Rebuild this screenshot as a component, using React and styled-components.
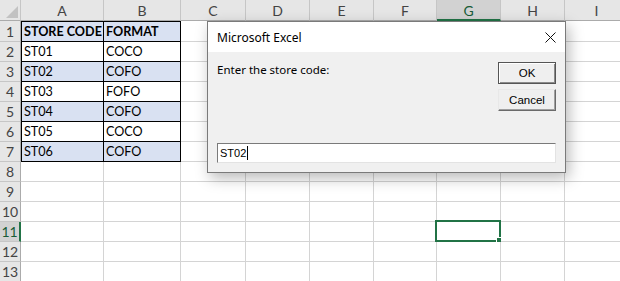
import styled, { createGlobalStyle } from "styled-components";

const GlobalStyle = createGlobalStyle`
  html, body {
    margin: 0;
    padding: 0;
    background: #fff;
    overflow: hidden;
  }
`;

const Sheet = styled.div`
  position: relative;
  display: grid;
  grid-template-columns: 21px 83px 77px 65px 64px 64px 63px 64px 64px 64px;
  grid-template-rows: 21px 21px repeat(12, 20px);
  width: 620px;
  height: 281px;
  overflow: hidden;
  font-family: Lato, "Liberation Sans", sans-serif;
  font-size: 12.6px;
  color: #000;
`;

const Corner = styled.div`
  position: relative;
  box-sizing: border-box;
  background: #e6e6e6;
  border-right: 1px solid #c6c6c6;
  border-bottom: 1px solid #ababab;
  &::after {
    content: "";
    position: absolute;
    right: 2px;
    bottom: 2px;
    border-style: solid;
    border-width: 0 0 12px 12px;
    border-color: transparent transparent #c2c2c2 transparent;
  }
`;

const ColHead = styled.div`
  box-sizing: border-box;
  display: flex;
  align-items: center;
  justify-content: center;
  background: ${(p) => (p.$active ? "#d2d2d2" : "#e6e6e6")};
  border-right: 1px solid #c6c6c6;
  border-bottom: ${(p) => (p.$active ? "2px solid #217346" : "1px solid #ababab")};
  color: ${(p) => (p.$active ? "#185c37" : "#444")};
  font-size: 14px;
  padding-top: ${(p) => (p.$active ? "1px" : "0")};
`;

const RowHead = styled.div`
  box-sizing: border-box;
  display: flex;
  align-items: center;
  justify-content: center;
  background: ${(p) => (p.$active ? "#d2d2d2" : "#e6e6e6")};
  border-right: ${(p) => (p.$active ? "2px solid #217346" : "1px solid #ababab")};
  border-bottom: 1px solid #c6c6c6;
  color: ${(p) => (p.$active ? "#185c37" : "#444")};
  font-size: 14px;
`;

const Cell = styled.div`
  position: relative;
  box-sizing: border-box;
  display: flex;
  align-items: center;
  padding-left: 2px;
  white-space: nowrap;
  background: ${(p) => (p.$fill ? "#d9e1f2" : "#fff")};
  font-weight: ${(p) => (p.$bold ? 700 : 400)};
  border-right: 1px solid ${(p) => (p.$table ? "#000" : "#d4d4d4")};
  border-bottom: 1px solid ${(p) => (p.$table ? "#000" : "#d4d4d4")};
  border-top: ${(p) => (p.$top ? "1px solid #000" : "none")};
  border-left: ${(p) => (p.$left ? "1px solid #000" : "none")};
`;

const Selection = styled.div`
  position: absolute;
  top: -2px;
  left: -2px;
  right: -1px;
  bottom: -1px;
  border: 2px solid #217346;
  &::after {
    content: "";
    position: absolute;
    right: -3px;
    bottom: -3px;
    width: 5px;
    height: 5px;
    background: #217346;
    box-shadow: 0 0 0 1px #fff;
  }
`;

const Dialog = styled.div`
  position: absolute;
  left: 207px;
  top: 21px;
  width: 359px;
  height: 152px;
  box-sizing: border-box;
  display: flex;
  flex-direction: column;
  background: #f0f0f0;
  border: 1px solid #7a7a7a;
  box-shadow: 3px 5px 14px rgba(0, 0, 0, 0.28);
  font-family: "Noto Sans", "Open Sans", sans-serif;
  font-size: 11.5px;
`;

const TitleBar = styled.div`
  height: 30px;
  display: flex;
  align-items: center;
  justify-content: space-between;
  padding: 0 9px 0 9px;
  background: #fff;
  color: #000;
  font-size: 12px;
`;

const Body = styled.div`
  flex: 1;
  display: grid;
  grid-template-columns: 1fr 58px;
  grid-template-rows: auto 1fr auto;
  padding: 10px 9px 9px 9px;
`;

const Prompt = styled.div`
  line-height: 16px;
  color: #000;
`;

const Buttons = styled.div`
  grid-row: 1 / 3;
  grid-column: 2;
  display: flex;
  flex-direction: column;
  gap: 5px;
`;

const Button = styled.div`
  box-sizing: border-box;
  height: 22px;
  display: flex;
  align-items: center;
  justify-content: center;
  background: #efefef;
  font-family: "Liberation Sans", Arial, sans-serif;
  font-size: 11.5px;
  color: #000;
  border: 1px solid;
  border-color: ${(p) => (p.$default ? "#555 #555 #555 #555" : "#e8e8e8 #6a6a6a #6a6a6a #e8e8e8")};
  box-shadow: ${(p) =>
    p.$default
      ? "inset 1px 1px 0 #fff, inset -1px -1px 0 #8a8a8a"
      : "inset -1px -1px 0 #a0a0a0"};
`;

const Input = styled.div`
  grid-column: 1 / -1;
  box-sizing: border-box;
  height: 20px;
  display: flex;
  align-items: center;
  padding-left: 2px;
  background: #fff;
  border: 1px solid;
  border-color: #7a7a7a #e3e3e3 #e3e3e3 #7a7a7a;
  font-family: "Liberation Sans", Arial, sans-serif;
  font-size: 11px;
  color: #000;
`;

const Caret = styled.span`
  display: inline-block;
  width: 1px;
  height: 14px;
  margin-left: 1px;
  background: #000;
`;

const cols = ["A", "B", "C", "D", "E", "F", "G", "H", "I"];

const table = [
  ["STORE CODE", "FORMAT"],
  ["ST01", "COCO"],
  ["ST02", "COFO"],
  ["ST03", "FOFO"],
  ["ST04", "COFO"],
  ["ST05", "COCO"],
  ["ST06", "COFO"],
];

function CloseIcon() {
  return (
    <svg width="11" height="11" viewBox="0 0 11 11">
      <path d="M0.5 0.5 L10.5 10.5 M10.5 0.5 L0.5 10.5" stroke="#111" strokeWidth="1" fill="none" />
    </svg>
  );
}

export default function App() {
  const rows = Array.from({ length: 13 }, (_, i) => i + 1);
  return (
    <>
      <GlobalStyle />
      <Sheet>
        <Corner />
        {cols.map((c) => (
          <ColHead key={c} $active={c === "G"}>
            {c}
          </ColHead>
        ))}
        {rows.map((r) => (
          <Row key={r} r={r} />
        ))}
        <Dialog>
          <TitleBar>
            <span>Microsoft Excel</span>
            <CloseIcon />
          </TitleBar>
          <Body>
            <Prompt>Enter the store code:</Prompt>
            <Buttons>
              <Button $default>OK</Button>
              <Button>Cancel</Button>
            </Buttons>
            <Input>
              ST02
              <Caret />
            </Input>
          </Body>
        </Dialog>
      </Sheet>
    </>
  );
}

function Row({ r }) {
  const data = table[r - 1];
  return (
    <>
      <RowHead $active={r === 11}>{r}</RowHead>
      {cols.map((c, ci) => {
        const inTable = data && ci < 2;
        return (
          <Cell
            key={c}
            $table={inTable}
            $fill={inTable && r % 2 === 1}
            $bold={inTable && r === 1}
            $top={inTable && r === 1}
            $left={inTable && ci === 0}
          >
            {inTable ? data[ci] : null}
            {c === "G" && r === 11 && <Selection />}
          </Cell>
        );
      })}
    </>
  );
}
